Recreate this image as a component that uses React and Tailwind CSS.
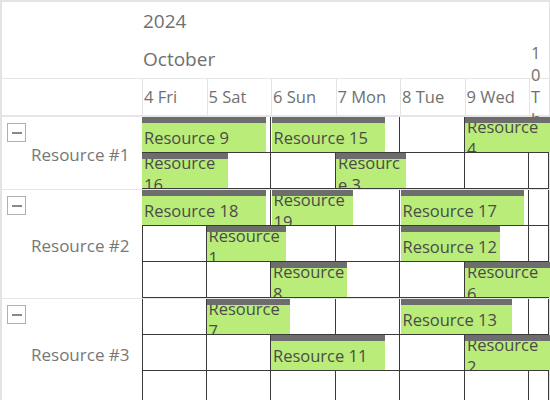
import React from "react";

const dias = ["4 Fri", "5 Sat", "6 Sun", "7 Mon", "8 Tue", "9 Wed", "10 Thu"];

// left / width in px from the start of the day grid, tw = width for the label
const grupos = [
  {
    nombre: "Resource #1",
    filas: [
      [
        { t: "Resource 9", l: 0, w: 124 },
        { t: "Resource 15", l: 129.5, w: 113 },
        { t: "Resource 4", l: 323, w: 90, tw: 80 },
      ],
      [
        { t: "Resource 16", l: 0, w: 86 },
        { t: "Resource 3", l: 194, w: 70 },
      ],
    ],
  },
  {
    nombre: "Resource #2",
    filas: [
      [
        { t: "Resource 18", l: 0, w: 124 },
        { t: "Resource 19", l: 129.5, w: 81 },
        { t: "Resource 17", l: 258.5, w: 123 },
      ],
      [
        { t: "Resource 1", l: 64.5, w: 79 },
        { t: "Resource 12", l: 258.5, w: 99.5 },
      ],
      [
        { t: "Resource 8", l: 129, w: 76 },
        { t: "Resource 6", l: 323, w: 90, tw: 80 },
      ],
    ],
  },
  {
    nombre: "Resource #3",
    filas: [
      [
        { t: "Resource 7", l: 64.5, w: 83 },
        { t: "Resource 13", l: 258.5, w: 111 },
      ],
      [
        { t: "Resource 11", l: 129, w: 114 },
        { t: "Resource 2", l: 323, w: 90, tw: 80 },
      ],
      [],
    ],
  },
];

const Evento = ({ ev }) => (
  <div
    className="absolute top-0 h-[35px] flex flex-col z-10"
    style={{ left: ev.l, width: ev.w }}
  >
    <div className="h-[6px] bg-[#6d6d6d] shrink-0" />
    <div className="flex-1 bg-[#b9ec78] flex items-center overflow-hidden">
      <div
        className="w-full pl-[2px] text-[16.5px] leading-[22px] text-[#4b4b4b] break-words"
        style={ev.tw ? { maxWidth: ev.tw } : undefined}
      >
        {ev.t}
      </div>
    </div>
  </div>
);

const Fila = ({ eventos }) => (
  <div className="relative h-[36px] flex">
    {dias.map((d, i) => (
      <div
        key={d}
        className={`h-full border-r border-b border-[#3a3a3a] ${
          i === 0 ? "border-l" : ""
        } ${i === dias.length - 1 ? "flex-1" : "w-[64.5px] shrink-0"}`}
      />
    ))}
    {eventos.map((ev) => (
      <Evento key={ev.t} ev={ev} />
    ))}
  </div>
);

export default function App() {
  return (
    <div className="w-[550px] h-[400px] overflow-hidden bg-white font-['Open_Sans',sans-serif]">
      <div className="border-t-2 border-l-2 border-r border-[#e3e3e3] min-h-[420px]">
        {/* year / month */}
        <div className="flex border-b border-[#e6e6e6]">
          <div className="w-[140px] shrink-0" />
          <div className="flex-1 pl-[1px] text-[19px] text-[#707070]">
            <div className="h-[38px] flex items-center">2024</div>
            <div className="h-[38px] flex items-center">October</div>
          </div>
        </div>

        {/* days */}
        <div className="flex h-[38px] border-b-2 border-[#e6e6e6]">
          <div className="w-[140px] shrink-0" />
          {dias.map((d, i) => (
            <div
              key={d}
              className={`h-full flex items-center border-l border-[#e3e3e3] pl-[1px] text-[16.5px] leading-[22px] text-[#707070] break-words ${
                i === dias.length - 1 ? "flex-1 min-w-0" : "w-[64.5px] shrink-0"
              }`}
            >
              <span className="w-full">{d}</span>
            </div>
          ))}
        </div>

        {/* resources */}
        <div className="relative z-0 bg-white">
          {grupos.map((g) => (
            <div key={g.nombre} className="flex border-b border-[#e6e6e6]">
              <div className="relative w-[140px] shrink-0 flex items-center pl-[29px] pt-[4px] text-[17px] text-[#777]">
                <div className="absolute left-[5px] top-[6px] w-[19px] h-[19px] border-[1.5px] border-[#b0b0b0] flex items-center justify-center">
                  <span className="w-[10px] h-[2px] bg-[#8a8a8a]" />
                </div>
                {g.nombre}
              </div>
              <div className="flex-1 flex flex-col">
                {g.filas.map((f, i) => (
                  <Fila key={i} eventos={f} />
                ))}
              </div>
            </div>
          ))}
        </div>
      </div>
    </div>
  );
}
